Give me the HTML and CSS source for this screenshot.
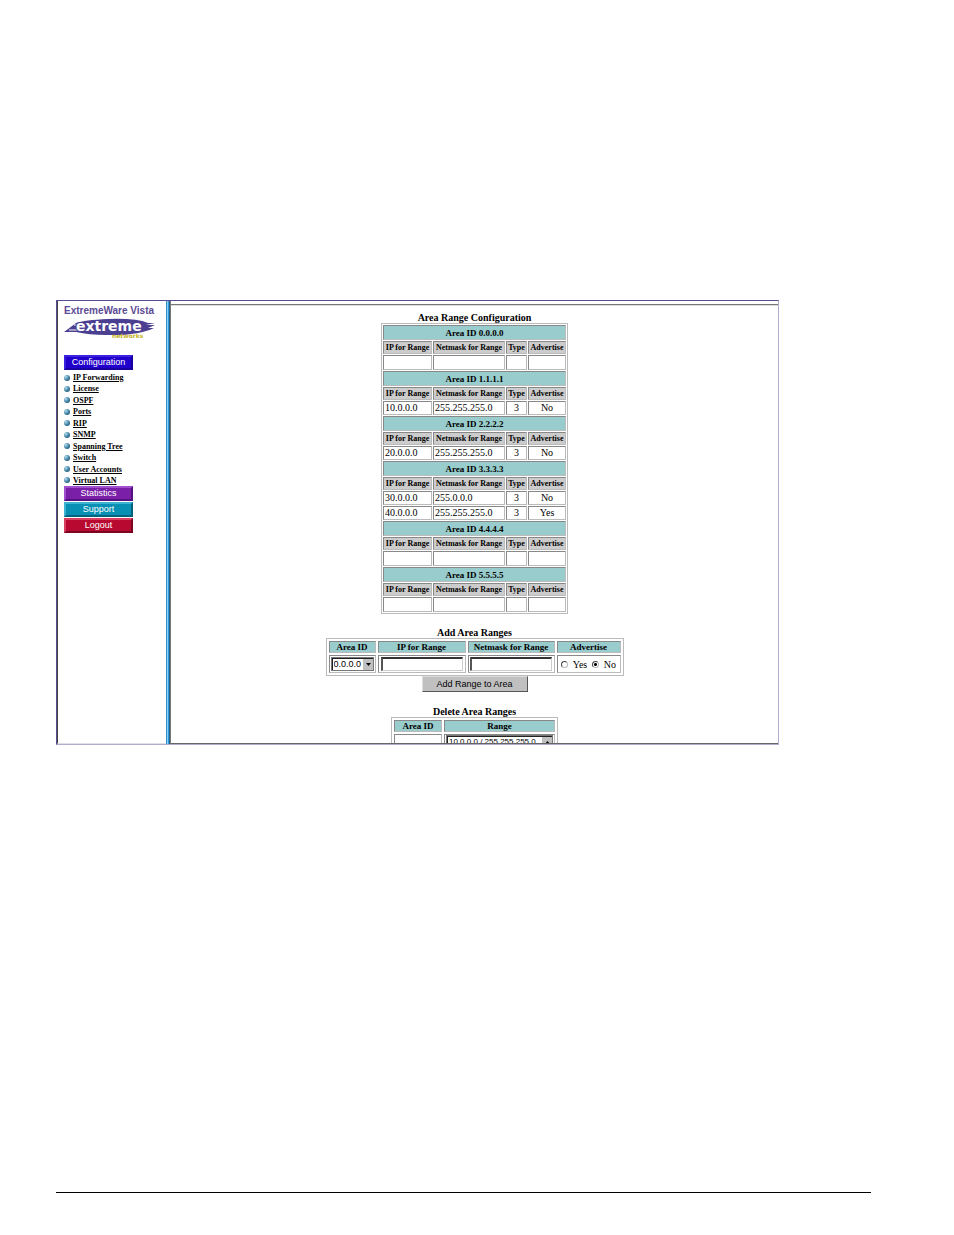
FILE: index.html
```html
<!DOCTYPE html>
<html lang="en">

<head>
	<meta charset="UTF-8">
	<meta name="viewport" content="width=device-width, initial-scale=1.0">
	<title>ExtremeWare Vista</title>

	<link rel="stylesheet" href="styles.css">
</head>

<body>
	<div class="page">
		<div class="frame">
			<nav class="sidebar">
				<div class="brand">ExtremeWare Vista</div>
				<svg class="logo" viewBox="0 0 92 24" role="img" aria-label="Extreme Networks">
					<path d="M0 15 L12 6 Q20 3 44 2 Q72 1 84 6 H91 L82 8 H91 L84 11 H90 Q74 19 42 18 Q25 18 12 15 Z" fill="#4b3f91" />
					<path d="M10 8 H20 M5 13 H16" stroke="#fff" stroke-width="1" />
					<text class="logo-name" x="12" y="14">extreme</text>
					<text class="logo-sub" x="48" y="21">networks</text>
				</svg>

				<button class="nav-button configuration">Configuration</button>
				<ul class="nav-list">
					<li><a href="#">IP Forwarding</a></li>
					<li><a href="#">License</a></li>
					<li><a href="#">OSPF</a></li>
					<li><a href="#">Ports</a></li>
					<li><a href="#">RIP</a></li>
					<li><a href="#">SNMP</a></li>
					<li><a href="#">Spanning Tree</a></li>
					<li><a href="#">Switch</a></li>
					<li><a href="#">User Accounts</a></li>
					<li><a href="#">Virtual LAN</a></li>
				</ul>
				<div class="nav-group">
					<button class="nav-button statistics">Statistics</button>
					<button class="nav-button support">Support</button>
					<button class="nav-button logout">Logout</button>
				</div>
			</nav>
			<div class="divider"></div>

			<main class="content">
				<h2>Area Range Configuration</h2>
				<table class="ranges">
					<colgroup>
						<col class="col-ip">
						<col class="col-mask">
						<col class="col-type">
						<col class="col-adv">
					</colgroup>
					<tr class="area"><th colspan="4">Area ID 0.0.0.0</th></tr>
					<tr class="head"><th>IP for Range</th><th>Netmask for Range</th><th>Type</th><th>Advertise</th></tr>
					<tr class="empty"><td></td><td></td><td></td><td></td></tr>

					<tr class="area"><th colspan="4">Area ID 1.1.1.1</th></tr>
					<tr class="head"><th>IP for Range</th><th>Netmask for Range</th><th>Type</th><th>Advertise</th></tr>
					<tr><td>10.0.0.0</td><td>255.255.255.0</td><td>3</td><td>No</td></tr>

					<tr class="area"><th colspan="4">Area ID 2.2.2.2</th></tr>
					<tr class="head"><th>IP for Range</th><th>Netmask for Range</th><th>Type</th><th>Advertise</th></tr>
					<tr><td>20.0.0.0</td><td>255.255.255.0</td><td>3</td><td>No</td></tr>

					<tr class="area"><th colspan="4">Area ID 3.3.3.3</th></tr>
					<tr class="head"><th>IP for Range</th><th>Netmask for Range</th><th>Type</th><th>Advertise</th></tr>
					<tr><td>30.0.0.0</td><td>255.0.0.0</td><td>3</td><td>No</td></tr>
					<tr><td>40.0.0.0</td><td>255.255.255.0</td><td>3</td><td>Yes</td></tr>

					<tr class="area"><th colspan="4">Area ID 4.4.4.4</th></tr>
					<tr class="head"><th>IP for Range</th><th>Netmask for Range</th><th>Type</th><th>Advertise</th></tr>
					<tr class="empty"><td></td><td></td><td></td><td></td></tr>

					<tr class="area"><th colspan="4">Area ID 5.5.5.5</th></tr>
					<tr class="head"><th>IP for Range</th><th>Netmask for Range</th><th>Type</th><th>Advertise</th></tr>
					<tr class="empty"><td></td><td></td><td></td><td></td></tr>
				</table>

				<form class="add-form">
					<h2>Add Area Ranges</h2>
					<table class="form-table add-table">
						<tr>
							<th class="add-area"><label for="area">Area ID</label></th>
							<th class="add-ip"><label for="ip">IP for Range</label></th>
							<th class="add-mask"><label for="mask">Netmask for Range</label></th>
							<th class="add-adv">Advertise</th>
						</tr>
						<tr>
							<td>
								<div class="select-box">
									<select id="area">
										<option>0.0.0.0</option>
									</select>
									<svg class="arrow" viewBox="0 0 10 11"><path d="M3 4h5L5.500 7z" /></svg>
								</div>
							</td>
							<td><input id="ip" class="text-input" type="text"></td>
							<td><input id="mask" class="text-input" type="text"></td>
							<td>
								<div class="radios">
									<input id="adv-yes" type="radio" name="advertise">
									<label for="adv-yes">Yes</label>
									<input id="adv-no" type="radio" name="advertise" checked>
									<label for="adv-no">No</label>
								</div>
							</td>
						</tr>
					</table>
					<button class="add-button" type="button">Add Range to Area</button>
				</form>

				<form class="delete-form">
					<h2>Delete Area Ranges</h2>
					<table class="form-table delete-table">
						<tr>
							<th class="del-area">Area ID</th>
							<th class="del-range"><label for="range">Range</label></th>
						</tr>
						<tr>
							<td></td>
							<td>
								<div class="select-box list-box">
									<select id="range" size="2">
										<option>10.0.0.0 / 255.255.255.0</option>
									</select>
									<svg class="arrow" viewBox="0 0 10 11"><path d="M3 7h5L5.500 4z" /></svg>
								</div>
							</td>
						</tr>
					</table>
				</form>
			</main>
		</div>

		<footer class="footer"></footer>
	</div>
</body>

</html>
```

FILE: styles.css
```css
*,
*::before,
*::after {
	margin: 0;
	padding: 0;
	box-sizing: border-box;

	--frame-color: #5b4a94;
	--area-color: #99cccc;
	--head-color: #cccccc;
}

body {
	background-color: #fff;
	color: #000;
	font-family: "Liberation Serif", "Times New Roman", serif;
	font-size: 10px;
}

.page {
	min-height: 100vh;
	padding: 300px 83px 42px 56px;

	display: flex;
	flex-direction: column;
}

.footer {
	margin-top: auto;
	border-top: 1px solid #000;
}

/* browser frame, the content is cut off at its lower edge */
.frame {
	height: 445px;
	margin-right: 92px;

	display: flex;
	overflow: hidden;

	border: 1px solid #b3acd0;
	border-top-color: var(--frame-color);
	border-left-color: var(--frame-color);
}

/* sidebar */
.sidebar {
	width: 109px;
	padding: 4px 0 0 6px;
	flex-shrink: 0;

	border-left: 1px solid #444;
	border-bottom: 1px solid #e0e0e8;
}

.divider {
	width: 5px;
	flex-shrink: 0;

	background: linear-gradient(to right, #2a8fc8 1px, #8fd0f4 1px 2px, #2f9ad8 2px 3px, #2b5f86 3px 4px, #777 4px);
}

.brand {
	height: 12px;

	color: var(--frame-color);
	font: bold 10px/12px "Liberation Sans", Arial, sans-serif;
	white-space: nowrap;
}

.logo {
	width: 92px;
	height: 24px;
	display: block;
}

.logo-name {
	fill: #fff;
	stroke: #4b3f91;
	stroke-width: 2px;
	paint-order: stroke;
	font: bold 14px "DejaVu Sans", Verdana, sans-serif;
}

.logo-sub {
	fill: #c5b52c;
	font: bold 6px "DejaVu Sans", Verdana, sans-serif;
}

.nav-button {
	width: 69px;
	height: 15px;
	display: block;

	border: 2px solid;
	color: #fff;
	font: 9px/11px "Liberation Sans", Arial, sans-serif;
}

.configuration {
	margin-top: 14px;
	background-color: #2200cc;
	border-color: #3a22e0 #1800a0 #1800a0 #3a22e0;
}

.statistics {
	background-color: #7a1fa8;
	border-color: #a050cc #551080 #551080 #a050cc;
}

.support {
	background-color: #088fb4;
	border-color: #3fb4d0 #05627f #05627f #3fb4d0;
}

.logout {
	background-color: #b80a30;
	border-color: #d84060 #7c0520 #7c0520 #d84060;
}

.nav-list {
	height: 114px;
	margin: 2px 0 0;

	display: flex;
	flex-direction: column;
	justify-content: space-between;

	list-style: none;
}

.nav-list li {
	display: flex;
	align-items: center;
	gap: 3px;

	font-size: 8px;
	font-weight: bold;
	line-height: 11px;
}

.nav-list li::before {
	content: "";
	width: 6px;
	height: 6px;

	border-radius: 50%;
	background: radial-gradient(circle at 30% 30%, #b8dcec, #3a7ea0 55%, #1a4058);
}

.nav-list a {
	color: #000;
}

.nav-group {
	display: flex;
	flex-direction: column;
	gap: 1px;
}

/* content */
.content {
	flex: 1;
	margin-top: 3px;
	padding-top: 7px;
	overflow: hidden;

	display: flex;
	flex-direction: column;
	align-items: center;

	border-top: 1px solid #777;
	border-bottom: 1px solid #666;
	box-shadow: inset 0 1px #ddd;
}

h2 {
	font-size: 10px;
	line-height: 11px;
	text-align: center;
}

table {
	table-layout: fixed;
	border: 1px solid #bbb;
	border-collapse: separate;
}

th,
td {
	border: 1px solid #bbb;
	border-top-color: #888;
	border-left-color: #888;
	white-space: nowrap;
}

th {
	font-size: 9px;
	line-height: 10px;
}

.ranges {
	width: 187px;
	border-spacing: 1px;
}

.ranges td {
	height: 14px;
	padding-left: 1px;
	line-height: 12px;
}

.ranges .empty td {
	height: 15px;
}

.ranges td:nth-child(n + 3) {
	padding: 0;
	text-align: center;
}

.ranges th {
	height: 13px;
}

.ranges .area th {
	height: 15px;
	background-color: var(--area-color);
}

.ranges .head th {
	background-color: var(--head-color);
	font-size: 8px;
}

.col-ip {
	width: 49px;
}

.col-mask {
	width: 72px;
}

.col-type {
	width: 21px;
}

.add-form,
.delete-form {
	display: flex;
	flex-direction: column;
	align-items: center;
	flex-shrink: 0;
}

.add-form {
	margin-top: 13px;
}

.delete-form {
	margin-top: 14px;
}

.form-table {
	border-spacing: 2px;
}

.form-table th {
	height: 12px;
	background-color: var(--area-color);
}

.form-table td {
	height: 18px;
	padding: 0 1px;
}

.add-table {
	width: 298px;
}

.add-area {
	width: 47px;
}

.add-ip {
	width: 88px;
}

.add-mask {
	width: 87px;
}

.select-box {
	height: 14px;
	position: relative;

	border: 1px solid #777;
}

.select-box select {
	width: 100%;
	height: 12px;
	padding-left: 1px;
	display: block;

	appearance: none;
	border: 1px solid #222;
	border-right: none;
	border-bottom: none;
	border-radius: 0;
	background-color: #fff;
	color: #000;
	font: 9px/11px "Liberation Sans", Arial, sans-serif;
}

.arrow {
	width: 10px;
	height: 11px;

	position: absolute;
	top: 1px;
	right: 0;

	background-color: #c0c0c0;
	pointer-events: none;
}

.select-box.list-box,
.list-box select {
	height: 40px;
	overflow: hidden;
}

.list-box option {
	min-height: 9px;
	padding: 0;
	font-size: 8px;
	line-height: 9px;
}

.text-input {
	width: 82px;
	height: 14px;
	margin: 0 auto;
	display: block;

	border: 1px solid #ccc;
	border-top: 2px solid #333;
	border-left: 2px solid #555;
	font-size: 10px;
}

.radios {
	display: flex;
	align-items: center;
	justify-content: space-around;
}

.radios input {
	width: 7px;
	height: 7px;

	appearance: none;
	border: 1px solid #444;
	border-right-color: #bbb;
	border-bottom-color: #bbb;
	border-radius: 50%;
}

.radios input:checked {
	background: radial-gradient(circle, #000 1px, #fff 2px);
}

.add-button {
	width: 106px;
	height: 16px;

	border: 1px solid #ddd;
	border-right-color: #555;
	border-bottom-color: #555;
	background-color: #c0c0c0;
	font: 9px/12px "Liberation Sans", Arial, sans-serif;
}

.delete-table {
	width: 167px;
}

.del-area {
	width: 48px;
}
```
